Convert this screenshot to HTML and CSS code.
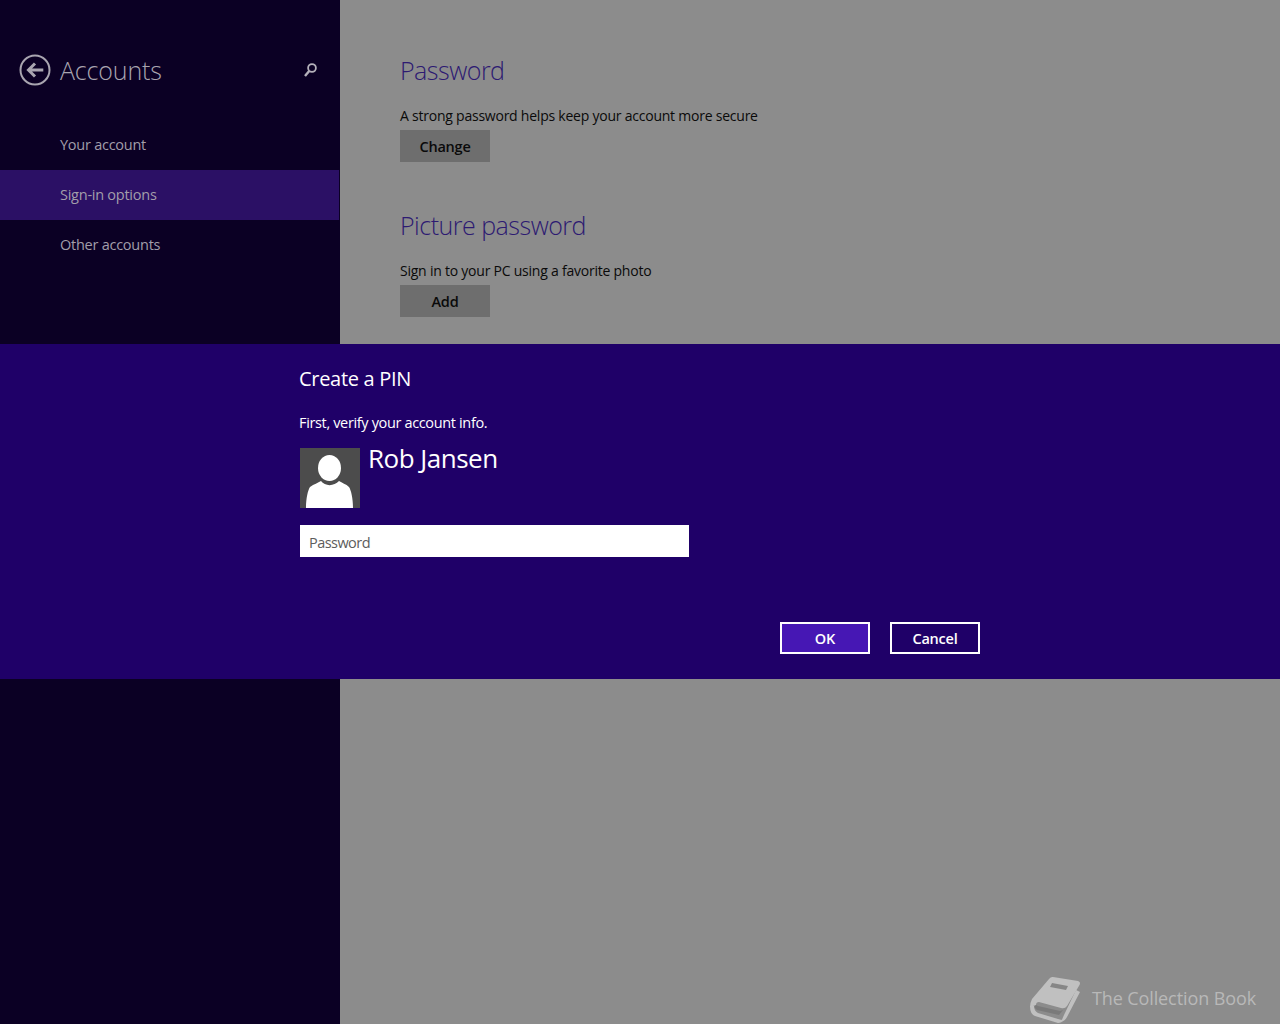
FILE: index.html
```html
<!DOCTYPE html>
<html lang="en">
<head>
<meta charset="utf-8">
<title>Accounts</title>
<link rel="stylesheet" href="styles.css">
</head>
<body>
<div class="page">
  <aside class="sidebar">
    <header class="side-head">
      <svg class="back-icon" width="32" height="32" viewBox="0 0 32 32" fill="none" stroke="#a9a5b0">
        <circle cx="16" cy="16" r="14.5" stroke-width="2"/>
        <path d="M24.300 16H10M16 9.500 9.500 16l6.500 6.500" stroke-width="3"/>
      </svg>
      <h1 class="side-title">Accounts</h1>
      <svg class="search-icon" width="16" height="16" viewBox="0 0 16 16" fill="none" stroke="#b5b1bb">
        <circle cx="9" cy="6" r="3.900" stroke-width="1.800"/>
        <path d="M6.200 9 2 14" stroke-width="2.400"/>
      </svg>
    </header>
    <nav class="side-nav">
      <a class="nav-item">Your account</a>
      <a class="nav-item nav-active">Sign-in options</a>
      <a class="nav-item">Other accounts</a>
    </nav>
  </aside>
  <main class="content">
    <section class="setting">
      <h2 class="setting-title">Password</h2>
      <p class="setting-text">A strong password helps keep your account more secure</p>
      <button class="dim-btn">Change</button>
    </section>
    <section class="setting">
      <h2 class="setting-title">Picture password</h2>
      <p class="setting-text">Sign in to your PC using a favorite photo</p>
      <button class="dim-btn">Add</button>
    </section>
    <div class="watermark">
      <svg width="60" height="54" viewBox="0 0 60 54">
        <path d="M28 7 53 11Q56 12 54.500 15L42 36Q40 39 36 38L14 32Q11 32 11 35L5 37Q5 33 7 29L24 9Q26 6.500 28 7Z" fill="#c0c0c0"/>
        <path d="M11 35 13 36 35 41 38 40 34 45 12 40 9 37Z" fill="#7a7a7a"/>
        <path d="M5 36Q5 44 10 46L33 53Q37 53 38 50 36 50 33 49L13 43Q9 41 9 36Z" fill="#c0c0c0"/>
        <path d="M51 20 55 22 42 47Q40 51 36 52L39 45Z" fill="#c0c0c0"/>
        <path d="M27 13 43 16 41 20 25 17Z" fill="#868686"/>
      </svg>
      <span class="watermark-text">The Collection Book</span>
    </div>
  </main>
</div>
<div class="dialog">
  <div class="dialog-inner">
    <h2 class="dialog-title">Create a PIN</h2>
    <p class="dialog-text">First, verify your account info.</p>
    <div class="user-row">
      <svg class="avatar" width="60" height="60" viewBox="0 0 60 60">
        <rect width="60" height="60" fill="#4c4c4c"/>
        <ellipse cx="29.500" cy="20" rx="11.500" ry="13" fill="#fff"/>
        <path d="M6 60C6 50 8 42 10 39 14 36 18 35 21 33 25 38.500 34 38.500 39 33 42 35 46 36 49 39 51 42 53 50 53 60Z" fill="#fff"/>
      </svg>
      <span class="user-name">Rob Jansen</span>
    </div>
    <div class="password-field">Password</div>
    <div class="dialog-actions">
      <button class="dialog-btn dialog-btn-primary">OK</button>
      <button class="dialog-btn">Cancel</button>
    </div>
  </div>
</div>
</body>
</html>
```
FILE: styles.css
```css
* { box-sizing: border-box; }
html, body { margin: 0; height: 100%; }
body {
  width: 1280px;
  height: 1024px;
  overflow: hidden;
  position: relative;
  font-family: "Open Sans", "Noto Sans", sans-serif;
  background: #8c8c8c;
}
.page { display: flex; height: 1024px; }
.sidebar { width: 340px; background: #0b0024; flex: none; }
.side-head {
  display: flex;
  align-items: center;
  height: 140px;
  padding: 0 21px 0 19px;
}
.back-icon { flex: none; margin-right: 9px; }
.side-title {
  flex: 1;
  margin: 0;
  font-size: 25px;
  font-weight: 300;
  color: #a9a5b0;
  letter-spacing: -0.15px;
}
.search-icon { flex: none; }
.side-nav { display: flex; flex-direction: column; margin-top: -20px; }
.nav-item {
  height: 50px;
  line-height: 50px;
  padding-left: 60px;
  font-size: 14.5px;
  color: #a29eaa;
  margin-right: 1px;
  letter-spacing: -0.25px;
}
.nav-active { background: #2b1065; }
.content { flex: 1; padding: 0 60px; position: relative; }
.setting { height: 155px; padding-top: 50px; }
.setting-title {
  margin: 0;
  height: 40px;
  line-height: 40px;
  font-size: 25px;
  font-weight: 300;
  color: #2d1a72;
  letter-spacing: -0.5px;
}
.setting-text {
  margin: 16px 0 0;
  height: 24px;
  line-height: 20px;
  font-size: 14px;
  color: #0a0a0a;
  letter-spacing: -0.23px;
}
.dim-btn {
  display: block;
  width: 90px;
  height: 32px;
  border: 0;
  padding: 0;
  background: #6e6e6e;
  color: #0a0a0a;
  font: 600 14.5px "Open Sans", "Noto Sans", sans-serif;
  letter-spacing: -0.2px;
}
.watermark {
  position: absolute;
  right: 24px;
  bottom: 0;
  display: flex;
  align-items: flex-start;
  gap: 7px;
  height: 54px;
}
.watermark-text {
  margin-top: 16px;
  font-size: 18px;
  color: #b8b8b8;
  letter-spacing: -0.1px;
}
.dialog {
  position: absolute;
  left: 0;
  right: 0;
  top: 344px;
  height: 335px;
  background: #1f0068;
  color: #fff;
}
.dialog-inner { width: 681px; margin-left: 299px; padding-top: 20px; }
.dialog-title {
  margin: 0;
  height: 30px;
  line-height: 30px;
  font-size: 20px;
  font-weight: 400;
  letter-spacing: -0.3px;
}
.dialog-text {
  margin: 19px 0 0;
  height: 20px;
  line-height: 20px;
  font-size: 14.5px;
  letter-spacing: -0.35px;
}
.user-row { display: flex; margin: 15px 0 0 1px; height: 60px; }
.avatar { flex: none; }
.user-name {
  margin-left: 8px;
  font-size: 26px;
  line-height: 21px;
  letter-spacing: -0.5px;
}
.password-field {
  width: 389px;
  height: 32px;
  margin: 17px 0 0 1px;
  padding-left: 9px;
  background: #fff;
  color: #5c5c5c;
  font-size: 14.5px;
  line-height: 35px;
  letter-spacing: -0.55px;
}
.dialog-actions {
  display: flex;
  justify-content: flex-end;
  gap: 20px;
  margin-top: 65px;
}
.dialog-btn {
  width: 90px;
  height: 32px;
  padding: 0;
  border: 2px solid #fff;
  background: transparent;
  color: #fff;
  font: 600 14.5px "Open Sans", "Noto Sans", sans-serif;
  letter-spacing: -0.2px;
}
.dialog-btn-primary { background: #4617b4; }
```
